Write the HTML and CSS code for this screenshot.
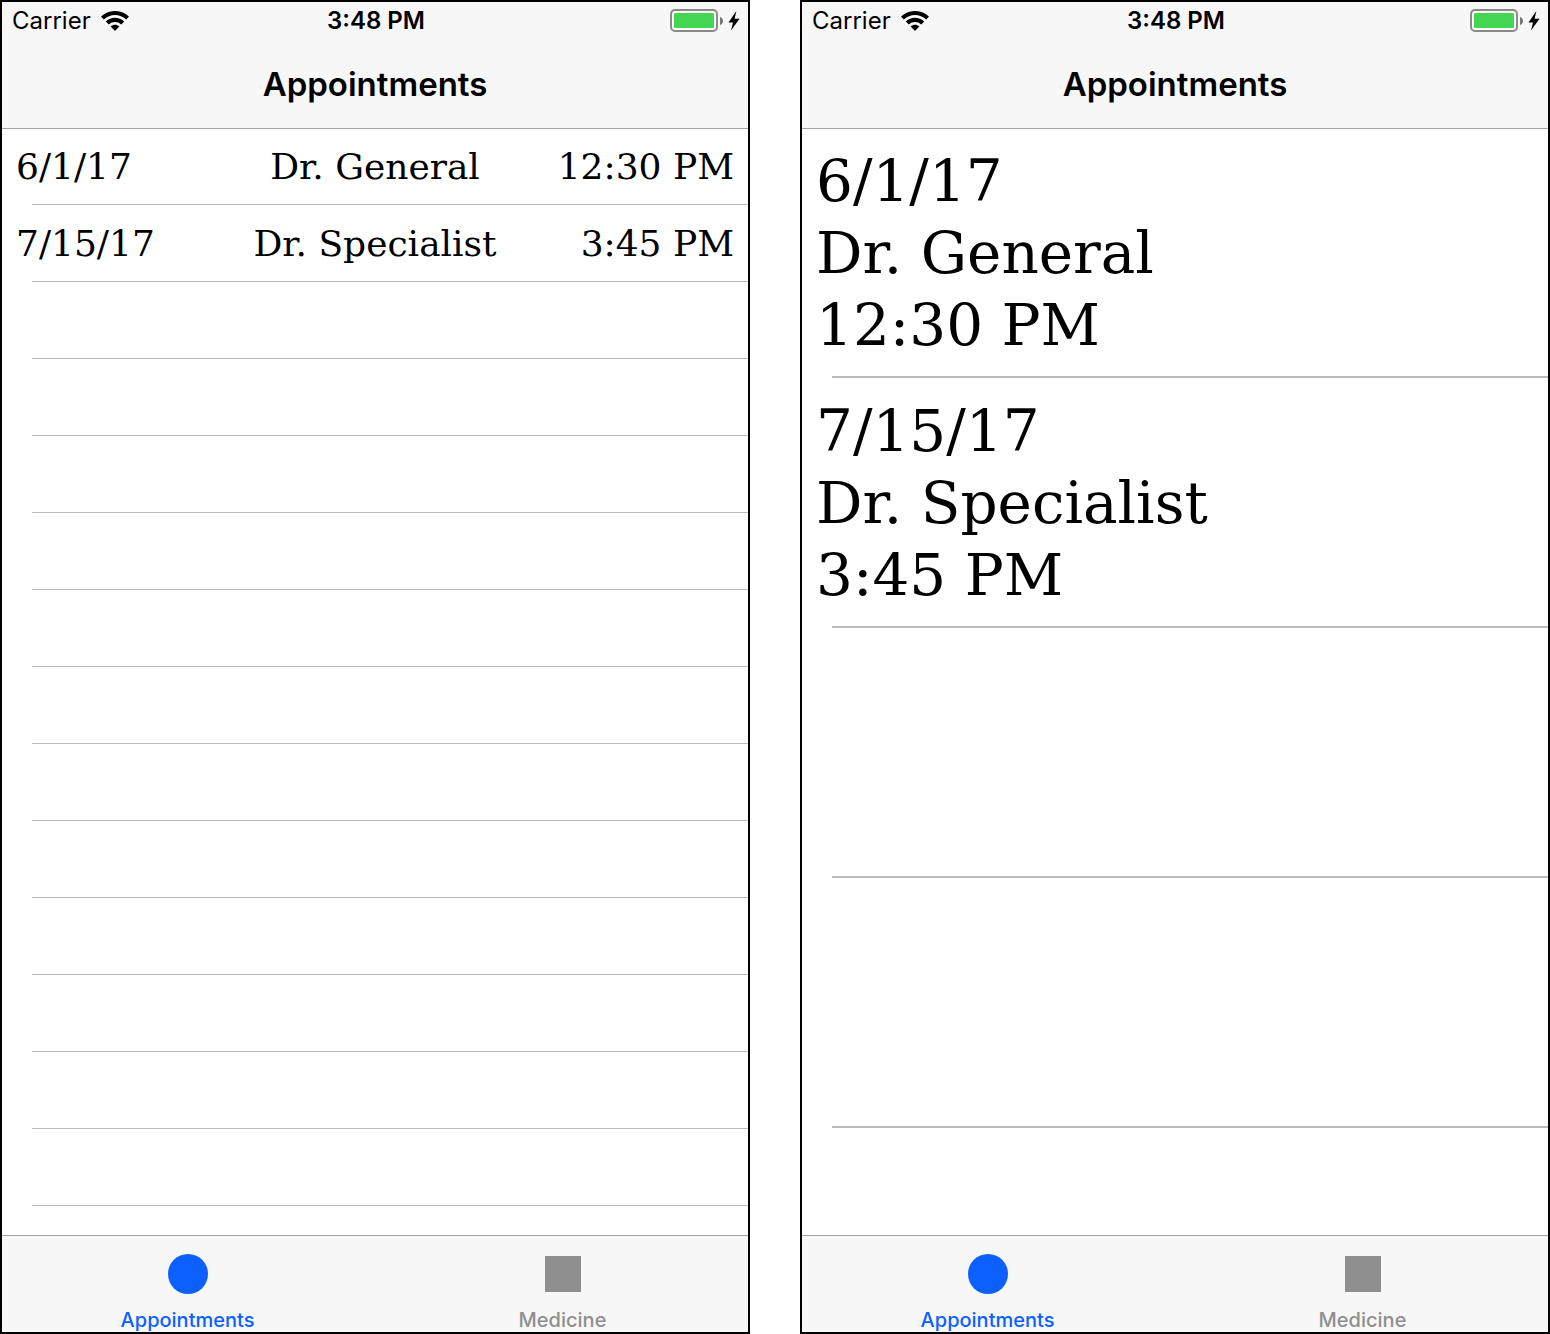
FILE: index.html
```html
<!DOCTYPE html>
<html lang="en">
<head>
  <meta charset="utf-8">
  <meta name="viewport" content="width=device-width, initial-scale=1">
  <title>Appointments</title>
  <link rel="stylesheet" href="styles.css">
</head>
<body>
  <svg class="symbols" aria-hidden="true">
    <symbol id="wifi" viewBox="0 0 28 20">
      <path d="M0 5.6C8-1.9 20-1.9 28 5.6L25.2 8.5C18.8 2.5 9.2 2.5 2.8 8.5Z"/>
      <path d="M4.8 10.6C10.2 5.6 17.8 5.6 23.2 10.6L20.3 13.5C16.7 10.2 11.3 10.2 7.7 13.5Z"/>
      <path d="M9.7 15.5C12.3 13.3 15.7 13.3 18.3 15.5L14 20Z"/>
    </symbol>
    <symbol id="battery" viewBox="0 0 54 24">
      <rect x="1" y="1" width="46" height="21" rx="4" fill="#fff" stroke="#8a8a8a" stroke-width="2"/>
      <rect x="4" y="4" width="40" height="15" rx="1.5" fill="#44d553"/>
      <path d="M50 8C54 9 54 15 50 16Z" fill="#777"/>
    </symbol>
    <symbol id="bolt" viewBox="0 0 12 20">
      <path d="M8.4 0L.5 11.4H5L3 19.4L11.6 7.7H6.6Z"/>
    </symbol>
  </svg>

  <main class="screens">
    <section class="phone">
      <header class="top">
        <div class="status">
          <span class="carrier">Carrier <svg class="wifi" role="img" aria-label="Wi-Fi"><use href="#wifi"/></svg></span>
          <time class="clock">3:48 PM</time>
          <span class="power" role="img" aria-label="Battery charging"><svg class="battery"><use href="#battery"/></svg><svg class="bolt"><use href="#bolt"/></svg></span>
        </div>
        <h1 class="title">Appointments</h1>
      </header>
      <ul class="list">
        <li class="row"><span>6/1/17</span><span>Dr. General</span><span>12:30 PM</span></li>
        <li class="row"><span>7/15/17</span><span>Dr. Specialist</span><span>3:45 PM</span></li>
        <li class="row"></li>
        <li class="row"></li>
        <li class="row"></li>
        <li class="row"></li>
        <li class="row"></li>
        <li class="row"></li>
        <li class="row"></li>
        <li class="row"></li>
        <li class="row"></li>
        <li class="row"></li>
        <li class="row"></li>
        <li class="row"></li>
      </ul>
      <nav class="tabs">
        <button type="button" class="tab tab-active" aria-current="page"><span class="glyph"><span class="circle"></span></span>Appointments</button>
        <button type="button" class="tab"><span class="glyph"><span class="square"></span></span>Medicine</button>
      </nav>
    </section>

    <section class="phone phone-large">
      <header class="top">
        <div class="status">
          <span class="carrier">Carrier <svg class="wifi" role="img" aria-label="Wi-Fi"><use href="#wifi"/></svg></span>
          <time class="clock">3:48 PM</time>
          <span class="power" role="img" aria-label="Battery charging"><svg class="battery"><use href="#battery"/></svg><svg class="bolt"><use href="#bolt"/></svg></span>
        </div>
        <h1 class="title">Appointments</h1>
      </header>
      <ul class="list">
        <li class="row"><span>6/1/17</span><span>Dr. General</span><span>12:30 PM</span></li>
        <li class="row"><span>7/15/17</span><span>Dr. Specialist</span><span>3:45 PM</span></li>
        <li class="row"></li>
        <li class="row"></li>
      </ul>
      <nav class="tabs">
        <button type="button" class="tab tab-active" aria-current="page"><span class="glyph"><span class="circle"></span></span>Appointments</button>
        <button type="button" class="tab"><span class="glyph"><span class="square"></span></span>Medicine</button>
      </nav>
    </section>
  </main>
</body>
</html>
```

FILE: styles.css
```css
* {
  box-sizing: border-box;
}

body {
  margin: 0;
  background: #fff;
  color: #000;
  font-family: Inter, "Liberation Sans", sans-serif;
}

.symbols {
  display: none;
}

.screens {
  display: grid;
  grid-template-columns: 1fr 1fr;
  gap: 50px;
  min-height: 100vh;
}

.phone {
  display: flex;
  flex-direction: column;
  border: 2px solid #000;
  overflow: hidden;
}

/* Status and navigation bar */

.top {
  background: #f7f7f7;
  border-bottom: 1px solid #a3a3a5;
}

.status {
  display: grid;
  grid-template-columns: 1fr auto 1fr;
  align-items: center;
  height: 38px;
  padding: 0 8px 0 10px;
  font-size: 24px;
  line-height: 28px;
}

.carrier,
.power {
  display: flex;
  align-items: center;
}

.carrier {
  gap: 10px;
}

.power {
  justify-content: flex-end;
  gap: 4px;
}

.clock {
  font-weight: 600;
}

.wifi {
  width: 28px;
  height: 20px;
}

.battery {
  width: 54px;
  height: 24px;
}

.bolt {
  width: 12px;
  height: 20px;
}

.title {
  margin: 0;
  font-size: 33px;
  font-weight: 600;
  line-height: 88px;
  text-align: center;
}

/* Appointment list */

.list {
  flex: 1;
  margin: -1px 0 0;
  padding: 0;
  list-style: none;
  font-family: "American Typewriter", "DejaVu Serif", serif;
  font-size: 36px;
}

/* The separator is inset from the left edge, past the row's text */
.row {
  display: grid;
  grid-template-columns: 1fr auto 1fr;
  align-items: center;
  min-height: 77px;
  padding: 0 14px;
  background: linear-gradient(#bbbbbe, #bbbbbe) 30px 100% / 100% 1px no-repeat;
}

.row span:last-child {
  text-align: right;
}

.phone-large .list {
  font-size: 58px;
  line-height: 72px;
}

.phone-large .row {
  grid-template-columns: 1fr;
  align-content: center;
  min-height: 250px;
  background-size: 100% 2px;
}

.phone-large .row span {
  text-align: left;
}

/* Tab bar */

.tabs {
  display: grid;
  grid-template-columns: 1fr 1fr;
  gap: 4px;
  background: #f7f7f7;
  border-top: 1px solid #a3a3a5;
}

.tab {
  display: flex;
  flex-direction: column;
  align-items: center;
  gap: 14px;
  padding: 18px 0 0;
  border: 0;
  background: none;
  color: #8f8f8f;
  font: 500 20px/24px Inter, "Liberation Sans", sans-serif;
}

.tab-active {
  color: #0b60ff;
}

.glyph {
  display: grid;
  place-items: center;
  height: 40px;
}

.circle {
  width: 40px;
  height: 40px;
  border-radius: 50%;
  background: currentColor;
}

.square {
  width: 36px;
  height: 36px;
  background: currentColor;
}
```
